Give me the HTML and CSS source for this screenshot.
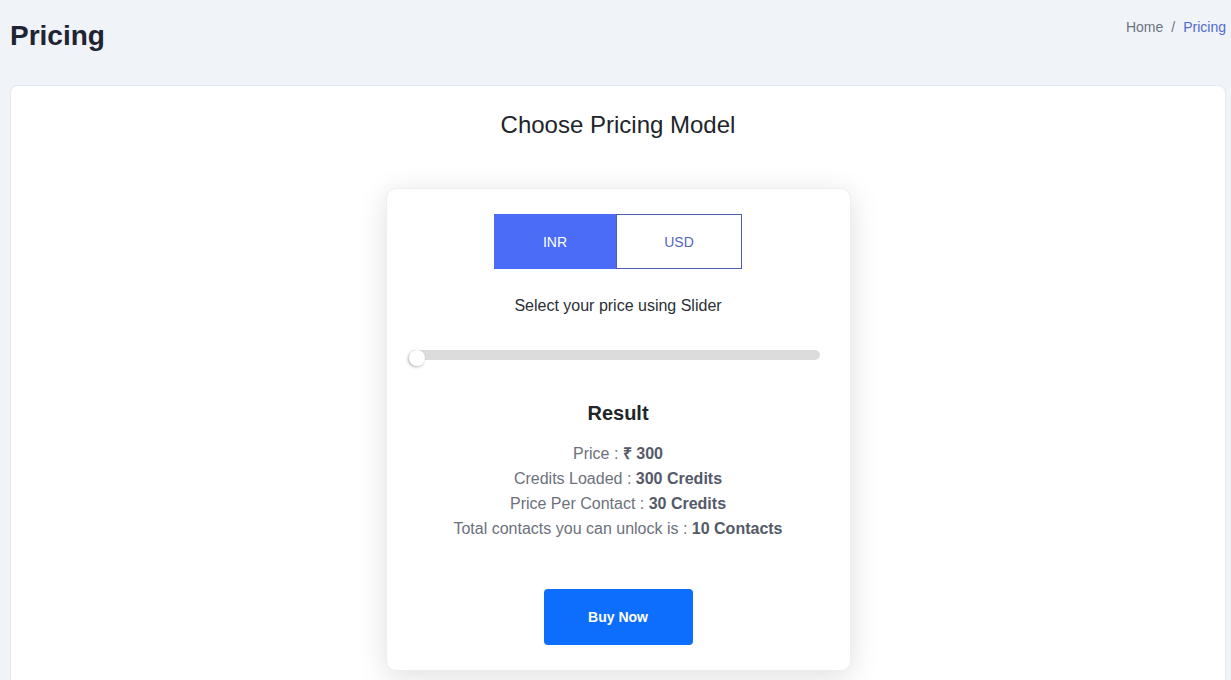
FILE: index.html
```html
<!DOCTYPE html>
<html lang="en">
<head>
    <meta charset="UTF-8">
    <meta name="viewport" content="width=device-width, initial-scale=1.0">
    <title>Pricing</title>
    <link rel="stylesheet" href="styles.css">
</head>
<body>
    <div class="page-header">
        <h1 class="page-title">Pricing</h1>
        <nav class="breadcrumb">
            <a href="#" class="crumb">Home</a>
            <span class="crumb-sep">/</span>
            <span class="crumb active">Pricing</span>
        </nav>
    </div>

    <div class="main-card">
        <h2 class="main-title">Choose Pricing Model</h2>

        <div class="price-card">
            <div class="currency-toggle">
                <button class="currency active">INR</button>
                <button class="currency">USD</button>
            </div>

            <p class="slider-label">Select your price using Slider</p>

            <div class="slider">
                <div class="slider-track"></div>
                <div class="slider-thumb"></div>
            </div>

            <h3 class="result-title">Result</h3>
            <div class="result">
                <p>Price : <strong>₹ 300</strong></p>
                <p>Credits Loaded : <strong>300 Credits</strong></p>
                <p>Price Per Contact : <strong>30 Credits</strong></p>
                <p>Total contacts you can unlock is : <strong>10 Contacts</strong></p>
            </div>

            <button class="buy-btn">Buy Now</button>
        </div>
    </div>
</body>
</html>
```

FILE: styles.css
```css
/* Général */
body {
    font-family: 'Liberation Sans', Arial, sans-serif;
    margin: 0;
    padding: 0 5px 0 10px;
    background-color: #f0f3f8;
    color: #212529;
}

/* En-tête */
.page-header {
    display: flex;
    justify-content: space-between;
    align-items: flex-start;
    padding-top: 19px;
}

.page-title {
    margin: 0;
    font-size: 28px;
    line-height: 34px;
    font-weight: 700;
    color: #1e2433;
}

.breadcrumb {
    display: flex;
    font-size: 14px;
    line-height: 20px;
    margin-top: -2px;
}

.crumb {
    color: #6c757d;
    text-decoration: none;
}

.crumb.active {
    color: #4f6bd0;
}

.crumb-sep {
    color: #6c757d;
    padding: 0 8px;
}

/* Carte principale */
.main-card {
    margin-top: 32px;
    background: #fff;
    border: 1px solid #e4e8ef;
    border-radius: 8px;
    padding: 24px 0 40px;
}

.main-title {
    margin: 0;
    text-align: center;
    font-size: 24px;
    line-height: 29px;
    font-weight: 400;
    color: #212529;
}

/* Carte de prix */
.price-card {
    width: 465px;
    box-sizing: border-box;
    margin: 49px auto 0;
    padding: 25px 24px 25px;
    background: #fff;
    border: 1px solid #eceef2;
    border-radius: 10px;
    box-shadow: 0 6px 30px rgba(0, 0, 0, 0.13);
    text-align: center;
}

.currency-toggle {
    display: flex;
    width: 248px;
    margin: 0 auto;
}

.currency {
    flex: 1;
    height: 55px;
    font-family: inherit;
    font-size: 14px;
    background: #fff;
    color: #5266c4;
    border: 1px solid #4d5fb3;
    cursor: pointer;
}

.currency.active {
    flex: 0 0 122px;
    background: #4a6cf7;
    border-color: #4a6cf7;
    color: #fff;
}

.slider-label {
    margin: 25px 0 0;
    font-size: 16px;
    line-height: 24px;
    color: #2b2f36;
}

/* Curseur */
.slider {
    position: relative;
    margin: 32px 6px 0 0;
    height: 16px;
}

.slider-track {
    height: 10px;
    background: #dcdcdc;
    border-radius: 5px;
}

.slider-thumb {
    position: absolute;
    top: 0;
    left: -2px;
    width: 16px;
    height: 16px;
    border-radius: 50%;
    background: #fff;
    box-shadow: -1px 1px 3px rgba(0, 0, 0, 0.3);
}

/* Résultat */
.result-title {
    margin: 35px 0 0;
    font-size: 20px;
    line-height: 24px;
    font-weight: 700;
    color: #212529;
}

.result {
    margin-top: 16px;
}

.result p {
    margin: 0;
    font-size: 16px;
    line-height: 25px;
    color: #6c717c;
}

.result strong {
    color: #545a68;
}

.buy-btn {
    display: block;
    margin: 48px auto 0;
    width: 149px;
    height: 56px;
    background: #0d6efd;
    color: #fff;
    border: none;
    border-radius: 4px;
    font-family: inherit;
    font-size: 14px;
    font-weight: 700;
    cursor: pointer;
}
```
